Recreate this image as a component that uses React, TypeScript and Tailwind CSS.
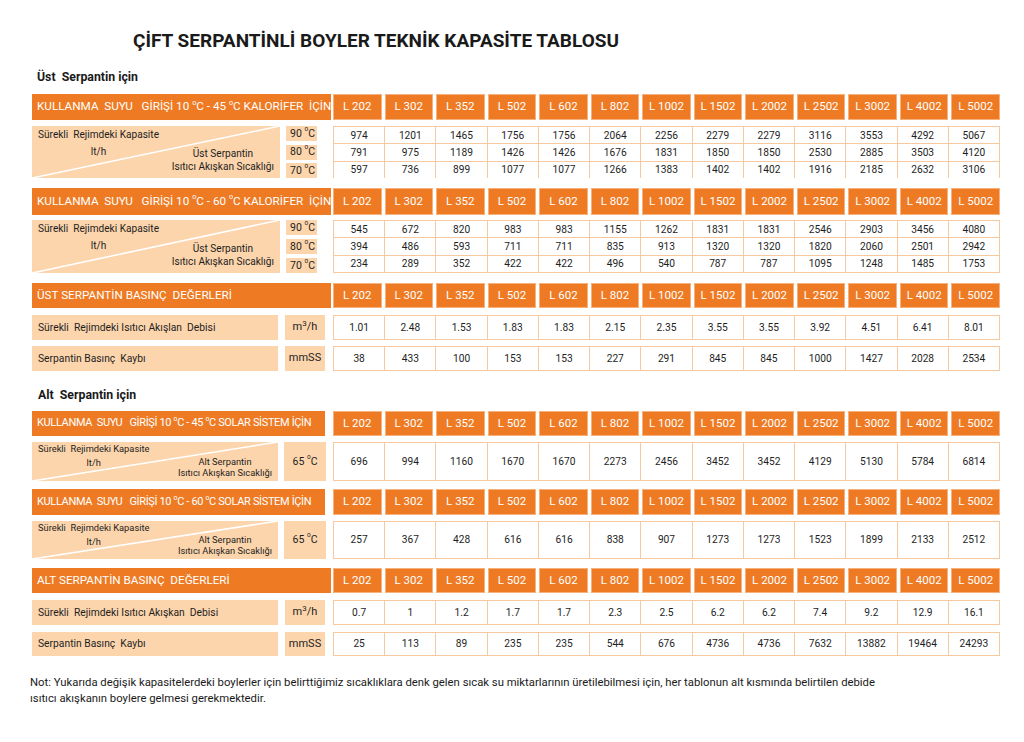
import React from "react";

const MODELS = ["L 202", "L 302", "L 352", "L 502", "L 602", "L 802", "L 1002", "L 1502", "L 2002", "L 2502", "L 3002", "L 4002", "L 5002"];

const ust45 = [
  ["974", "1201", "1465", "1756", "1756", "2064", "2256", "2279", "2279", "3116", "3553", "4292", "5067"],
  ["791", "975", "1189", "1426", "1426", "1676", "1831", "1850", "1850", "2530", "2885", "3503", "4120"],
  ["597", "736", "899", "1077", "1077", "1266", "1383", "1402", "1402", "1916", "2185", "2632", "3106"],
];
const ust60 = [
  ["545", "672", "820", "983", "983", "1155", "1262", "1831", "1831", "2546", "2903", "3456", "4080"],
  ["394", "486", "593", "711", "711", "835", "913", "1320", "1320", "1820", "2060", "2501", "2942"],
  ["234", "289", "352", "422", "422", "496", "540", "787", "787", "1095", "1248", "1485", "1753"],
];
const ustDebi = ["1.01", "2.48", "1.53", "1.83", "1.83", "2.15", "2.35", "3.55", "3.55", "3.92", "4.51", "6.41", "8.01"];
const ustKayip = ["38", "433", "100", "153", "153", "227", "291", "845", "845", "1000", "1427", "2028", "2534"];
const alt45 = ["696", "994", "1160", "1670", "1670", "2273", "2456", "3452", "3452", "4129", "5130", "5784", "6814"];
const alt60 = ["257", "367", "428", "616", "616", "838", "907", "1273", "1273", "1523", "1899", "2133", "2512"];
const altDebi = ["0.7", "1", "1.2", "1.7", "1.7", "2.3", "2.5", "6.2", "6.2", "7.4", "9.2", "12.9", "16.1"];
const altKayip = ["25", "113", "89", "235", "235", "544", "676", "4736", "4736", "7632", "13882", "19464", "24293"];

// small raised "o" before C, as in the printed table
const Deg = () => (
  <>
    <span className="relative -top-[4px] text-[0.62em]">o</span>C
  </>
);

const M3 = () => (
  <>
    m<span className="relative -top-[4px] text-[8px]">3</span>/h
  </>
);

const HeaderRow = ({ label, labelCls, h }: { label: React.ReactNode; labelCls: string; h: string }) => (
  <div className={`flex ${h}`}>
    <div className={`${labelCls} bg-[#ee7b24] text-white flex items-center pl-[5px] whitespace-pre overflow-hidden`}>
      {label}
    </div>
    <div className="ml-auto w-[667px] grid grid-cols-[repeat(13,minmax(0,1fr))] gap-[3px]">
      {MODELS.map((m) => (
        <div key={m} className="bg-[#ee7b24] border border-[#f6b17c] text-white text-[11.5px] flex items-center justify-center">
          {m}
        </div>
      ))}
    </div>
  </div>
);

const DataGrid = ({ rows, rowH }: { rows: string[][]; rowH: string }) => (
  <div className="ml-auto w-[667px] grid grid-cols-[repeat(13,minmax(0,1fr))] gap-px p-px bg-[#f6c9a1]">
    {rows.flatMap((r, i) =>
      r.map((v, j) => (
        <div key={`${i}-${j}`} className={`bg-white ${rowH} flex items-center justify-center text-[10.2px] text-[#1e1e1e]`}>
          {v}
        </div>
      ))
    )}
  </div>
);

const DiagBox = ({
  w,
  bottomA,
  small,
}: {
  w: string;
  bottomA: string;
  small?: boolean;
}) => (
  <div className={`relative ${w} h-full bg-[#fcd5ad] grid text-[#1e1e1e] ${small ? "text-[9.3px]" : "text-[10.1px]"}`}>
    <svg className="absolute inset-0 w-full h-full" preserveAspectRatio="none" viewBox="0 0 100 100">
      <line x1="0" y1="100" x2="100" y2="0" stroke="white" strokeWidth="1.6" vectorEffect="non-scaling-stroke" />
    </svg>
    <div className={`relative col-start-1 row-start-1 self-start justify-self-start text-center pl-[6px] ${small ? "leading-[14px]" : "leading-[17px]"}`}>
      <div className="whitespace-pre">Sürekli  Rejimdeki Kapasite</div>
      <div>lt/h</div>
    </div>
    <div className={`relative col-start-1 row-start-1 self-end justify-self-end text-center pr-[6px] ${small ? "leading-[11px] pb-[3px]" : "leading-[13px] pb-[5px]"}`}>
      <div>{bottomA}</div>
      <div>Isıtıcı Akışkan Sıcaklığı</div>
    </div>
  </div>
);

const TempTable = ({ rows, h }: { rows: string[][]; h: string }) => (
  <div className={`flex ${h}`}>
    <DiagBox w="w-[248px]" bottomA="Üst Serpantin" />
    <div className="ml-[6px] flex flex-col justify-between">
      {["90", "80", "70"].map((t) => (
        <div key={t} className="w-[31px] h-[15px] bg-[#fcd5ad] text-[10.5px] text-[#1e1e1e] flex items-center pl-[4px] whitespace-nowrap">
          {t}&nbsp;<Deg />
        </div>
      ))}
    </div>
    <DataGrid rows={rows} rowH="h-[16.3px]" />
  </div>
);

const SolarTable = ({ values, h }: { values: string[]; h: string }) => (
  <div className={`flex ${h}`}>
    <DiagBox w="w-[246px]" bottomA="Alt Serpantin" small />
    <div className="ml-[6px] w-[42px] bg-[#fcd5ad] text-[10.5px] text-[#1e1e1e] flex items-center justify-center">
      65&nbsp;<Deg />
    </div>
    <DataGrid rows={[values]} rowH="h-full" />
  </div>
);

const SimpleRow = ({ label, unit, values, h, mt }: { label: string; unit: React.ReactNode; values: string[]; h: string; mt: string }) => (
  <div className={`flex ${h} ${mt}`}>
    <div className="w-[246px] bg-[#fcd5ad] text-[10.3px] text-[#1e1e1e] flex items-center pl-[6px] whitespace-pre">{label}</div>
    <div className="ml-[7px] w-[40px] bg-[#fcd5ad] text-[11px] text-[#1e1e1e] flex items-center justify-center">{unit}</div>
    <DataGrid rows={[values]} rowH="h-full" />
  </div>
);

const KALORIFER = "w-[299px] text-[11.7px]";
const SOLAR = "w-[293px] text-[11px] tracking-[-0.35px]";

export default function App() {
  return (
    <div className="w-[1024px] h-[742px] bg-white pl-[32px] pt-[28px] overflow-hidden font-['Roboto',sans-serif]">
      <div className="w-[968px] flex flex-col">
        <h1 className="h-[26px] leading-[26px] ml-[101px] text-[19px] font-bold text-[#1a1a1a]">
          ÇİFT SERPANTİNLİ BOYLER TEKNİK KAPASİTE TABLOSU
        </h1>

        <div className="mt-[15px] h-[16px] leading-[16px] ml-[5px] text-[12.3px] font-bold text-[#1a1a1a] whitespace-pre">Üst  Serpantin için</div>

        <div className="mt-[9px]">
          <HeaderRow h="h-[26px]" labelCls={KALORIFER} label={<>KULLANMA  SUYU   GİRİŞİ 10 <Deg /> - 45 <Deg /> KALORİFER  İÇİN</>} />
        </div>
        <div className="mt-[6px]">
          <TempTable rows={ust45} h="h-[52px]" />
        </div>

        <div className="mt-[10px]">
          <HeaderRow h="h-[27px]" labelCls={KALORIFER} label={<>KULLANMA  SUYU   GİRİŞİ 10 <Deg /> - 60 <Deg /> KALORİFER  İÇİN</>} />
        </div>
        <div className="mt-[5px]">
          <TempTable rows={ust60} h="h-[53px]" />
        </div>

        <div className="mt-[10px]">
          <HeaderRow h="h-[25px]" labelCls={KALORIFER} label="ÜST SERPANTİN BASINÇ  DEĞERLERİ" />
        </div>
        <SimpleRow mt="mt-[7px]" h="h-[25px]" label="Sürekli  Rejimdeki Isıtıcı Akışlan  Debisi" unit={<M3 />} values={ustDebi} />
        <SimpleRow mt="mt-[6px]" h="h-[25px]" label="Serpantin Basınç  Kaybı" unit="mmSS" values={ustKayip} />

        <div className="mt-[16px] h-[16px] leading-[16px] ml-[6px] text-[12.3px] font-bold text-[#1a1a1a] whitespace-pre">Alt  Serpantin için</div>

        <div className="mt-[8px]">
          <HeaderRow h="h-[25px]" labelCls={SOLAR} label={<>KULLANMA  SUYU   GİRİŞİ 10 <Deg /> - 45 <Deg /> SOLAR SİSTEM İÇİN</>} />
        </div>
        <div className="mt-[6px]">
          <SolarTable values={alt45} h="h-[39px]" />
        </div>

        <div className="mt-[8px]">
          <HeaderRow h="h-[26px]" labelCls={SOLAR} label={<>KULLANMA  SUYU   GİRİŞİ 10 <Deg /> - 60 <Deg /> SOLAR SİSTEM İÇİN</>} />
        </div>
        <div className="mt-[6px]">
          <SolarTable values={alt60} h="h-[38px]" />
        </div>

        <div className="mt-[9px]">
          <HeaderRow h="h-[25px]" labelCls={KALORIFER} label="ALT SERPANTİN BASINÇ  DEĞERLERİ" />
        </div>
        <SimpleRow mt="mt-[7px]" h="h-[25px]" label="Sürekli  Rejimdeki Isıtıcı Akışkan  Debisi" unit={<M3 />} values={altDebi} />
        <SimpleRow mt="mt-[7px]" h="h-[24px]" label="Serpantin Basınç  Kaybı" unit="mmSS" values={altKayip} />

        <p className="mt-[19px] -ml-[2px] text-[11.3px] leading-[16px] text-[#1a1a1a] whitespace-nowrap">
          Not: Yukarıda değişik kapasitelerdeki boylerler için belirttiğimiz sıcaklıklara denk gelen sıcak su miktarlarının  üretilebilmesi için, her tablonun alt kısmında belirtilen debide
          <br />
          ısıtıcı akışkanın boylere gelmesi gerekmektedir.
        </p>
      </div>
    </div>
  );
}
